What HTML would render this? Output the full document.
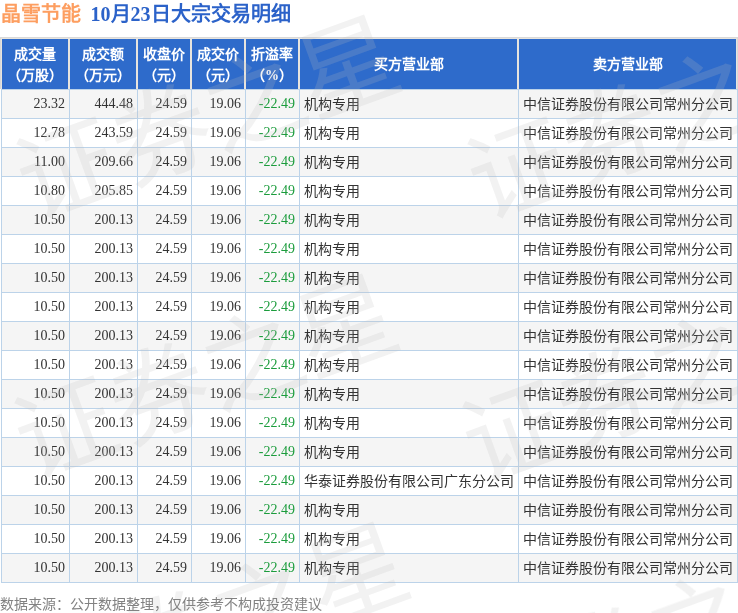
<!DOCTYPE html><html lang="zh-CN"><head><meta charset="utf-8"><style>
*{margin:0;padding:0;box-sizing:border-box}
html,body{width:738px;height:613px;overflow:hidden;background:#fff}
body{position:relative;font-family:"Liberation Sans",sans-serif}
.t{position:absolute;white-space:nowrap}
.title1{left:1px;top:2px;font-size:20px;font-weight:900;color:#fd9e60;line-height:24px}
.title2{left:90.5px;top:2px;font-size:20px;font-weight:bold;color:#2b62c9;line-height:24px;font-family:"Liberation Serif",sans-serif}
.hdr{position:absolute;left:0;top:37px;width:738px;height:52px;background:#d9d9d9}
.hin{position:absolute;left:1px;top:1px;width:736px;height:51px;background:#e7e4de}
.hc{position:absolute;top:39px;height:50px;background:#2e6bcb;color:#fff;font-size:14px;font-weight:bold;text-align:center;line-height:21px;padding-top:1px;display:flex;align-items:center;justify-content:center}
.row{position:absolute;left:1px;width:737px;height:30px;border:1px solid #bcd3e9}
.vl{position:absolute;top:89px;width:1px;height:494px;background:#bcd3e9}
.c{position:absolute;height:28px;line-height:28px;font-size:14px;color:#333;white-space:nowrap}
.num{font-family:"Liberation Serif",serif;text-align:right}
.grn{color:#1b9c3c}
.foot{left:0;top:594px;font-size:14px;color:#828282;line-height:20px}
</style></head><body>
<div id="wrap" style="position:absolute;left:0;top:0;width:738px;height:613px;will-change:transform">
<div class="t title1">晶雪节能</div>
<div class="t title2">10月23日大宗交易明细</div>
<div class="hdr"><div class="hin"></div></div>
<div class="hc" style="left:2px;width:66px"><div>成交量<br>（万股）</div></div>
<div class="hc" style="left:70px;width:66px"><div>成交额<br>（万元）</div></div>
<div class="hc" style="left:138px;width:52px"><div>收盘价<br>（元）</div></div>
<div class="hc" style="left:192px;width:52px"><div>成交价<br>（元）</div></div>
<div class="hc" style="left:246px;width:52px"><div>折溢率<br>（<span style="font-family:'Liberation Serif',serif;font-weight:bold;font-size:14px">%</span>）</div></div>
<div class="hc" style="left:300px;width:217px"><div>买方营业部</div></div>
<div class="hc" style="left:519px;width:217px"><div>卖方营业部</div></div>
<div style="position:absolute;left:1px;top:89px;width:737px;height:30px;background:#f5f5f5"></div>
<div style="position:absolute;left:1px;top:118px;width:737px;height:30px;background:#ffffff"></div>
<div style="position:absolute;left:1px;top:147px;width:737px;height:30px;background:#f5f5f5"></div>
<div style="position:absolute;left:1px;top:176px;width:737px;height:30px;background:#ffffff"></div>
<div style="position:absolute;left:1px;top:205px;width:737px;height:30px;background:#f5f5f5"></div>
<div style="position:absolute;left:1px;top:234px;width:737px;height:30px;background:#ffffff"></div>
<div style="position:absolute;left:1px;top:263px;width:737px;height:30px;background:#f5f5f5"></div>
<div style="position:absolute;left:1px;top:292px;width:737px;height:30px;background:#ffffff"></div>
<div style="position:absolute;left:1px;top:321px;width:737px;height:30px;background:#f5f5f5"></div>
<div style="position:absolute;left:1px;top:350px;width:737px;height:30px;background:#ffffff"></div>
<div style="position:absolute;left:1px;top:379px;width:737px;height:30px;background:#f5f5f5"></div>
<div style="position:absolute;left:1px;top:408px;width:737px;height:30px;background:#ffffff"></div>
<div style="position:absolute;left:1px;top:437px;width:737px;height:30px;background:#f5f5f5"></div>
<div style="position:absolute;left:1px;top:466px;width:737px;height:30px;background:#ffffff"></div>
<div style="position:absolute;left:1px;top:495px;width:737px;height:30px;background:#f5f5f5"></div>
<div style="position:absolute;left:1px;top:524px;width:737px;height:30px;background:#ffffff"></div>
<div style="position:absolute;left:1px;top:553px;width:737px;height:30px;background:#f5f5f5"></div>
<div style="position:absolute;left:1px;top:89px;width:737px;height:1px;background:#bcd3e9"></div>
<div style="position:absolute;left:1px;top:118px;width:737px;height:1px;background:#bcd3e9"></div>
<div style="position:absolute;left:1px;top:147px;width:737px;height:1px;background:#bcd3e9"></div>
<div style="position:absolute;left:1px;top:176px;width:737px;height:1px;background:#bcd3e9"></div>
<div style="position:absolute;left:1px;top:205px;width:737px;height:1px;background:#bcd3e9"></div>
<div style="position:absolute;left:1px;top:234px;width:737px;height:1px;background:#bcd3e9"></div>
<div style="position:absolute;left:1px;top:263px;width:737px;height:1px;background:#bcd3e9"></div>
<div style="position:absolute;left:1px;top:292px;width:737px;height:1px;background:#bcd3e9"></div>
<div style="position:absolute;left:1px;top:321px;width:737px;height:1px;background:#bcd3e9"></div>
<div style="position:absolute;left:1px;top:350px;width:737px;height:1px;background:#bcd3e9"></div>
<div style="position:absolute;left:1px;top:379px;width:737px;height:1px;background:#bcd3e9"></div>
<div style="position:absolute;left:1px;top:408px;width:737px;height:1px;background:#bcd3e9"></div>
<div style="position:absolute;left:1px;top:437px;width:737px;height:1px;background:#bcd3e9"></div>
<div style="position:absolute;left:1px;top:466px;width:737px;height:1px;background:#bcd3e9"></div>
<div style="position:absolute;left:1px;top:495px;width:737px;height:1px;background:#bcd3e9"></div>
<div style="position:absolute;left:1px;top:524px;width:737px;height:1px;background:#bcd3e9"></div>
<div style="position:absolute;left:1px;top:553px;width:737px;height:1px;background:#bcd3e9"></div>
<div style="position:absolute;left:1px;top:582px;width:737px;height:1px;background:#bcd3e9"></div>
<div class="vl" style="left:1px"></div>
<div class="vl" style="left:69px"></div>
<div class="vl" style="left:137px"></div>
<div class="vl" style="left:191px"></div>
<div class="vl" style="left:245px"></div>
<div class="vl" style="left:299px"></div>
<div class="vl" style="left:518px"></div>
<div class="vl" style="left:737px"></div>
<div class="c num" style="left:2px;top:90px;width:63px">23.32</div>
<div class="c num" style="left:70px;top:90px;width:63px">444.48</div>
<div class="c num" style="left:138px;top:90px;width:49px">24.59</div>
<div class="c num" style="left:192px;top:90px;width:49px">19.06</div>
<div class="c num grn" style="left:246px;top:90px;width:49px">-22.49</div>
<div class="c" style="left:304px;top:90px">机构专用</div>
<div class="c" style="left:523px;top:90px">中信证券股份有限公司常州分公司</div>
<div class="c num" style="left:2px;top:119px;width:63px">12.78</div>
<div class="c num" style="left:70px;top:119px;width:63px">243.59</div>
<div class="c num" style="left:138px;top:119px;width:49px">24.59</div>
<div class="c num" style="left:192px;top:119px;width:49px">19.06</div>
<div class="c num grn" style="left:246px;top:119px;width:49px">-22.49</div>
<div class="c" style="left:304px;top:119px">机构专用</div>
<div class="c" style="left:523px;top:119px">中信证券股份有限公司常州分公司</div>
<div class="c num" style="left:2px;top:148px;width:63px">11.00</div>
<div class="c num" style="left:70px;top:148px;width:63px">209.66</div>
<div class="c num" style="left:138px;top:148px;width:49px">24.59</div>
<div class="c num" style="left:192px;top:148px;width:49px">19.06</div>
<div class="c num grn" style="left:246px;top:148px;width:49px">-22.49</div>
<div class="c" style="left:304px;top:148px">机构专用</div>
<div class="c" style="left:523px;top:148px">中信证券股份有限公司常州分公司</div>
<div class="c num" style="left:2px;top:177px;width:63px">10.80</div>
<div class="c num" style="left:70px;top:177px;width:63px">205.85</div>
<div class="c num" style="left:138px;top:177px;width:49px">24.59</div>
<div class="c num" style="left:192px;top:177px;width:49px">19.06</div>
<div class="c num grn" style="left:246px;top:177px;width:49px">-22.49</div>
<div class="c" style="left:304px;top:177px">机构专用</div>
<div class="c" style="left:523px;top:177px">中信证券股份有限公司常州分公司</div>
<div class="c num" style="left:2px;top:206px;width:63px">10.50</div>
<div class="c num" style="left:70px;top:206px;width:63px">200.13</div>
<div class="c num" style="left:138px;top:206px;width:49px">24.59</div>
<div class="c num" style="left:192px;top:206px;width:49px">19.06</div>
<div class="c num grn" style="left:246px;top:206px;width:49px">-22.49</div>
<div class="c" style="left:304px;top:206px">机构专用</div>
<div class="c" style="left:523px;top:206px">中信证券股份有限公司常州分公司</div>
<div class="c num" style="left:2px;top:235px;width:63px">10.50</div>
<div class="c num" style="left:70px;top:235px;width:63px">200.13</div>
<div class="c num" style="left:138px;top:235px;width:49px">24.59</div>
<div class="c num" style="left:192px;top:235px;width:49px">19.06</div>
<div class="c num grn" style="left:246px;top:235px;width:49px">-22.49</div>
<div class="c" style="left:304px;top:235px">机构专用</div>
<div class="c" style="left:523px;top:235px">中信证券股份有限公司常州分公司</div>
<div class="c num" style="left:2px;top:264px;width:63px">10.50</div>
<div class="c num" style="left:70px;top:264px;width:63px">200.13</div>
<div class="c num" style="left:138px;top:264px;width:49px">24.59</div>
<div class="c num" style="left:192px;top:264px;width:49px">19.06</div>
<div class="c num grn" style="left:246px;top:264px;width:49px">-22.49</div>
<div class="c" style="left:304px;top:264px">机构专用</div>
<div class="c" style="left:523px;top:264px">中信证券股份有限公司常州分公司</div>
<div class="c num" style="left:2px;top:293px;width:63px">10.50</div>
<div class="c num" style="left:70px;top:293px;width:63px">200.13</div>
<div class="c num" style="left:138px;top:293px;width:49px">24.59</div>
<div class="c num" style="left:192px;top:293px;width:49px">19.06</div>
<div class="c num grn" style="left:246px;top:293px;width:49px">-22.49</div>
<div class="c" style="left:304px;top:293px">机构专用</div>
<div class="c" style="left:523px;top:293px">中信证券股份有限公司常州分公司</div>
<div class="c num" style="left:2px;top:322px;width:63px">10.50</div>
<div class="c num" style="left:70px;top:322px;width:63px">200.13</div>
<div class="c num" style="left:138px;top:322px;width:49px">24.59</div>
<div class="c num" style="left:192px;top:322px;width:49px">19.06</div>
<div class="c num grn" style="left:246px;top:322px;width:49px">-22.49</div>
<div class="c" style="left:304px;top:322px">机构专用</div>
<div class="c" style="left:523px;top:322px">中信证券股份有限公司常州分公司</div>
<div class="c num" style="left:2px;top:351px;width:63px">10.50</div>
<div class="c num" style="left:70px;top:351px;width:63px">200.13</div>
<div class="c num" style="left:138px;top:351px;width:49px">24.59</div>
<div class="c num" style="left:192px;top:351px;width:49px">19.06</div>
<div class="c num grn" style="left:246px;top:351px;width:49px">-22.49</div>
<div class="c" style="left:304px;top:351px">机构专用</div>
<div class="c" style="left:523px;top:351px">中信证券股份有限公司常州分公司</div>
<div class="c num" style="left:2px;top:380px;width:63px">10.50</div>
<div class="c num" style="left:70px;top:380px;width:63px">200.13</div>
<div class="c num" style="left:138px;top:380px;width:49px">24.59</div>
<div class="c num" style="left:192px;top:380px;width:49px">19.06</div>
<div class="c num grn" style="left:246px;top:380px;width:49px">-22.49</div>
<div class="c" style="left:304px;top:380px">机构专用</div>
<div class="c" style="left:523px;top:380px">中信证券股份有限公司常州分公司</div>
<div class="c num" style="left:2px;top:409px;width:63px">10.50</div>
<div class="c num" style="left:70px;top:409px;width:63px">200.13</div>
<div class="c num" style="left:138px;top:409px;width:49px">24.59</div>
<div class="c num" style="left:192px;top:409px;width:49px">19.06</div>
<div class="c num grn" style="left:246px;top:409px;width:49px">-22.49</div>
<div class="c" style="left:304px;top:409px">机构专用</div>
<div class="c" style="left:523px;top:409px">中信证券股份有限公司常州分公司</div>
<div class="c num" style="left:2px;top:438px;width:63px">10.50</div>
<div class="c num" style="left:70px;top:438px;width:63px">200.13</div>
<div class="c num" style="left:138px;top:438px;width:49px">24.59</div>
<div class="c num" style="left:192px;top:438px;width:49px">19.06</div>
<div class="c num grn" style="left:246px;top:438px;width:49px">-22.49</div>
<div class="c" style="left:304px;top:438px">机构专用</div>
<div class="c" style="left:523px;top:438px">中信证券股份有限公司常州分公司</div>
<div class="c num" style="left:2px;top:467px;width:63px">10.50</div>
<div class="c num" style="left:70px;top:467px;width:63px">200.13</div>
<div class="c num" style="left:138px;top:467px;width:49px">24.59</div>
<div class="c num" style="left:192px;top:467px;width:49px">19.06</div>
<div class="c num grn" style="left:246px;top:467px;width:49px">-22.49</div>
<div class="c" style="left:304px;top:467px">华泰证券股份有限公司广东分公司</div>
<div class="c" style="left:523px;top:467px">中信证券股份有限公司常州分公司</div>
<div class="c num" style="left:2px;top:496px;width:63px">10.50</div>
<div class="c num" style="left:70px;top:496px;width:63px">200.13</div>
<div class="c num" style="left:138px;top:496px;width:49px">24.59</div>
<div class="c num" style="left:192px;top:496px;width:49px">19.06</div>
<div class="c num grn" style="left:246px;top:496px;width:49px">-22.49</div>
<div class="c" style="left:304px;top:496px">机构专用</div>
<div class="c" style="left:523px;top:496px">中信证券股份有限公司常州分公司</div>
<div class="c num" style="left:2px;top:525px;width:63px">10.50</div>
<div class="c num" style="left:70px;top:525px;width:63px">200.13</div>
<div class="c num" style="left:138px;top:525px;width:49px">24.59</div>
<div class="c num" style="left:192px;top:525px;width:49px">19.06</div>
<div class="c num grn" style="left:246px;top:525px;width:49px">-22.49</div>
<div class="c" style="left:304px;top:525px">机构专用</div>
<div class="c" style="left:523px;top:525px">中信证券股份有限公司常州分公司</div>
<div class="c num" style="left:2px;top:554px;width:63px">10.50</div>
<div class="c num" style="left:70px;top:554px;width:63px">200.13</div>
<div class="c num" style="left:138px;top:554px;width:49px">24.59</div>
<div class="c num" style="left:192px;top:554px;width:49px">19.06</div>
<div class="c num grn" style="left:246px;top:554px;width:49px">-22.49</div>
<div class="c" style="left:304px;top:554px">机构专用</div>
<div class="c" style="left:523px;top:554px">中信证券股份有限公司常州分公司</div>
<div style="position:absolute;font-size:100px;line-height:100px;color:rgba(190,190,190,0.2);white-space:nowrap;transform-origin:0 50%;font-family:'Liberation Sans',sans-serif;pointer-events:none;left:21px;top:137px;transform:rotate(-20deg);letter-spacing:-0.5px">证券之星</div>
<div style="position:absolute;font-size:100px;line-height:100px;color:rgba(190,190,190,0.2);white-space:nowrap;transform-origin:0 50%;font-family:'Liberation Sans',sans-serif;pointer-events:none;left:472px;top:137px;transform:rotate(-20deg);letter-spacing:-0.5px">证券之星</div>
<div style="position:absolute;font-size:100px;line-height:100px;color:rgba(190,190,190,0.2);white-space:nowrap;transform-origin:0 50%;font-family:'Liberation Sans',sans-serif;pointer-events:none;left:19px;top:396px;transform:rotate(-20deg);letter-spacing:-0.5px">证券之星</div>
<div style="position:absolute;font-size:100px;line-height:100px;color:rgba(190,190,190,0.2);white-space:nowrap;transform-origin:0 50%;font-family:'Liberation Sans',sans-serif;pointer-events:none;left:467px;top:400px;transform:rotate(-20deg);letter-spacing:-0.5px">证券之星</div>
<div style="position:absolute;font-size:100px;line-height:100px;color:rgba(190,190,190,0.2);white-space:nowrap;transform-origin:0 50%;font-family:'Liberation Sans',sans-serif;pointer-events:none;left:30px;top:644px;transform:rotate(-20deg);letter-spacing:-0.5px">证券之星</div>
<div style="position:absolute;font-size:100px;line-height:100px;color:rgba(190,190,190,0.2);white-space:nowrap;transform-origin:0 50%;font-family:'Liberation Sans',sans-serif;pointer-events:none;left:465px;top:661px;transform:rotate(-20deg);letter-spacing:-0.5px">证券之星</div>
<div class="t foot">数据来源：公开数据整理，仅供参考不构成投资建议</div>
</div></body></html>
